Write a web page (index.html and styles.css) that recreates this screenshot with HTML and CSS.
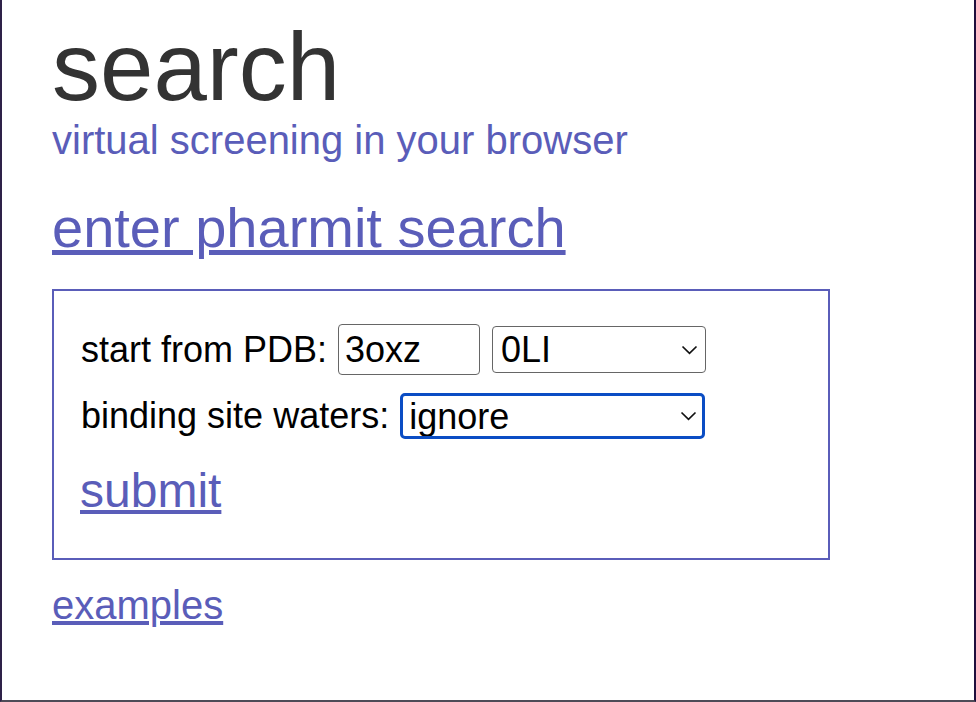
FILE: index.html
```html
<!DOCTYPE html>
<html lang="en">
<head>
<meta charset="utf-8">
<title>search</title>
<link rel="stylesheet" href="styles.css">
</head>
<body>
<main class="page">
  <h1 class="title">search</h1>
  <p class="subtitle">virtual screening in your browser</p>
  <a class="enter" href="#">enter pharmit search</a>
  <form class="box">
    <div class="row">
      <span class="label">start from PDB:</span>
      <input class="pdb" type="text" value="3oxz">
      <span class="sel sel-lig">
        <select class="select"><option>0LI</option></select>
        <svg class="chev" width="17" height="10" viewBox="0 0 17 10"><path d="M1.5 1.5 L8.5 8.3 L15.5 1.5" fill="none" stroke="#111" stroke-width="1.7"/></svg>
      </span>
    </div>
    <div class="row row2">
      <span class="label">binding site waters:</span>
      <span class="sel sel-water">
        <select class="select focused"><option>ignore</option></select>
        <svg class="chev" width="17" height="10" viewBox="0 0 17 10"><path d="M1.5 1.5 L8.5 8.3 L15.5 1.5" fill="none" stroke="#111" stroke-width="1.7"/></svg>
      </span>
    </div>
    <a class="submit" href="#">submit</a>
  </form>
  <a class="examples" href="#">examples</a>
</main>
</body>
</html>
```

FILE: styles.css
```css
html, body {
  margin: 0;
  padding: 0;
}
body {
  height: 702px;
  box-sizing: border-box;
  border-left: 2px solid #2e2148;
  border-right: 2px solid #1f0f3d;
  border-bottom: 2px solid #4e4b57;
  background: #fff;
  font-family: "Liberation Sans", Arial, Helvetica, sans-serif;
  overflow: hidden;
}
.page {
  display: flex;
  flex-direction: column;
  align-items: flex-start;
  padding-left: 50px;
}
.title {
  margin: 19px 0 0 0;
  font-size: 96px;
  line-height: 96px;
  font-weight: normal;
  color: #333333;
}
.subtitle {
  margin: 5px 0 0 0;
  font-size: 40px;
  line-height: 40px;
  color: #5a5db9;
}
.enter {
  margin-top: 40px;
  font-size: 56px;
  line-height: 56px;
  color: #5a5db9;
}
.box {
  margin-top: 33px;
  width: 778px;
  box-sizing: border-box;
  border: 2px solid #5a5db9;
  padding: 33px 26px 43px 27px;
  display: flex;
  flex-direction: column;
  align-items: flex-start;
}
.row {
  display: flex;
  align-items: center;
  font-size: 36px;
  color: #000;
}
.row2 {
  margin-top: 18px;
}
.label {
  margin-right: 11px;
}
.pdb {
  width: 142px;
  height: 51px;
  box-sizing: border-box;
  border: 1px solid #666;
  border-radius: 4px;
  padding: 0 0 0 6px;
  font-family: "Liberation Sans", Arial, sans-serif;
  font-size: 36px;
  color: #000;
  margin: 0 12px 0 0;
  outline: none;
}
.sel {
  position: relative;
  display: inline-flex;
}
.select {
  appearance: none;
  -webkit-appearance: none;
  box-sizing: border-box;
  background: #fff;
  border: 1px solid #666;
  border-radius: 4px;
  font-family: "Liberation Sans", Arial, sans-serif;
  font-size: 36px;
  color: #000;
  padding: 0 0 0 8px;
  margin: 0;
  outline: none;
}
.sel-lig .select {
  width: 214px;
  height: 47px;
}
.sel-water .select {
  width: 305px;
  height: 46px;
}
.select.focused {
  border: 3px solid #0b4dc4;
  border-radius: 5px;
  padding-left: 6px;
}
.chev {
  position: absolute;
  right: 8px;
  top: 50%;
  margin-top: -5px;
  pointer-events: none;
}
.sel-water .chev {
  right: 8px;
}
.submit {
  margin-top: 28px;
  margin-left: -1px;
  font-size: 48px;
  line-height: 48px;
  color: #5a5db9;
}
.examples {
  margin-top: 25px;
  font-size: 40px;
  line-height: 40px;
  color: #5a5db9;
}
```
